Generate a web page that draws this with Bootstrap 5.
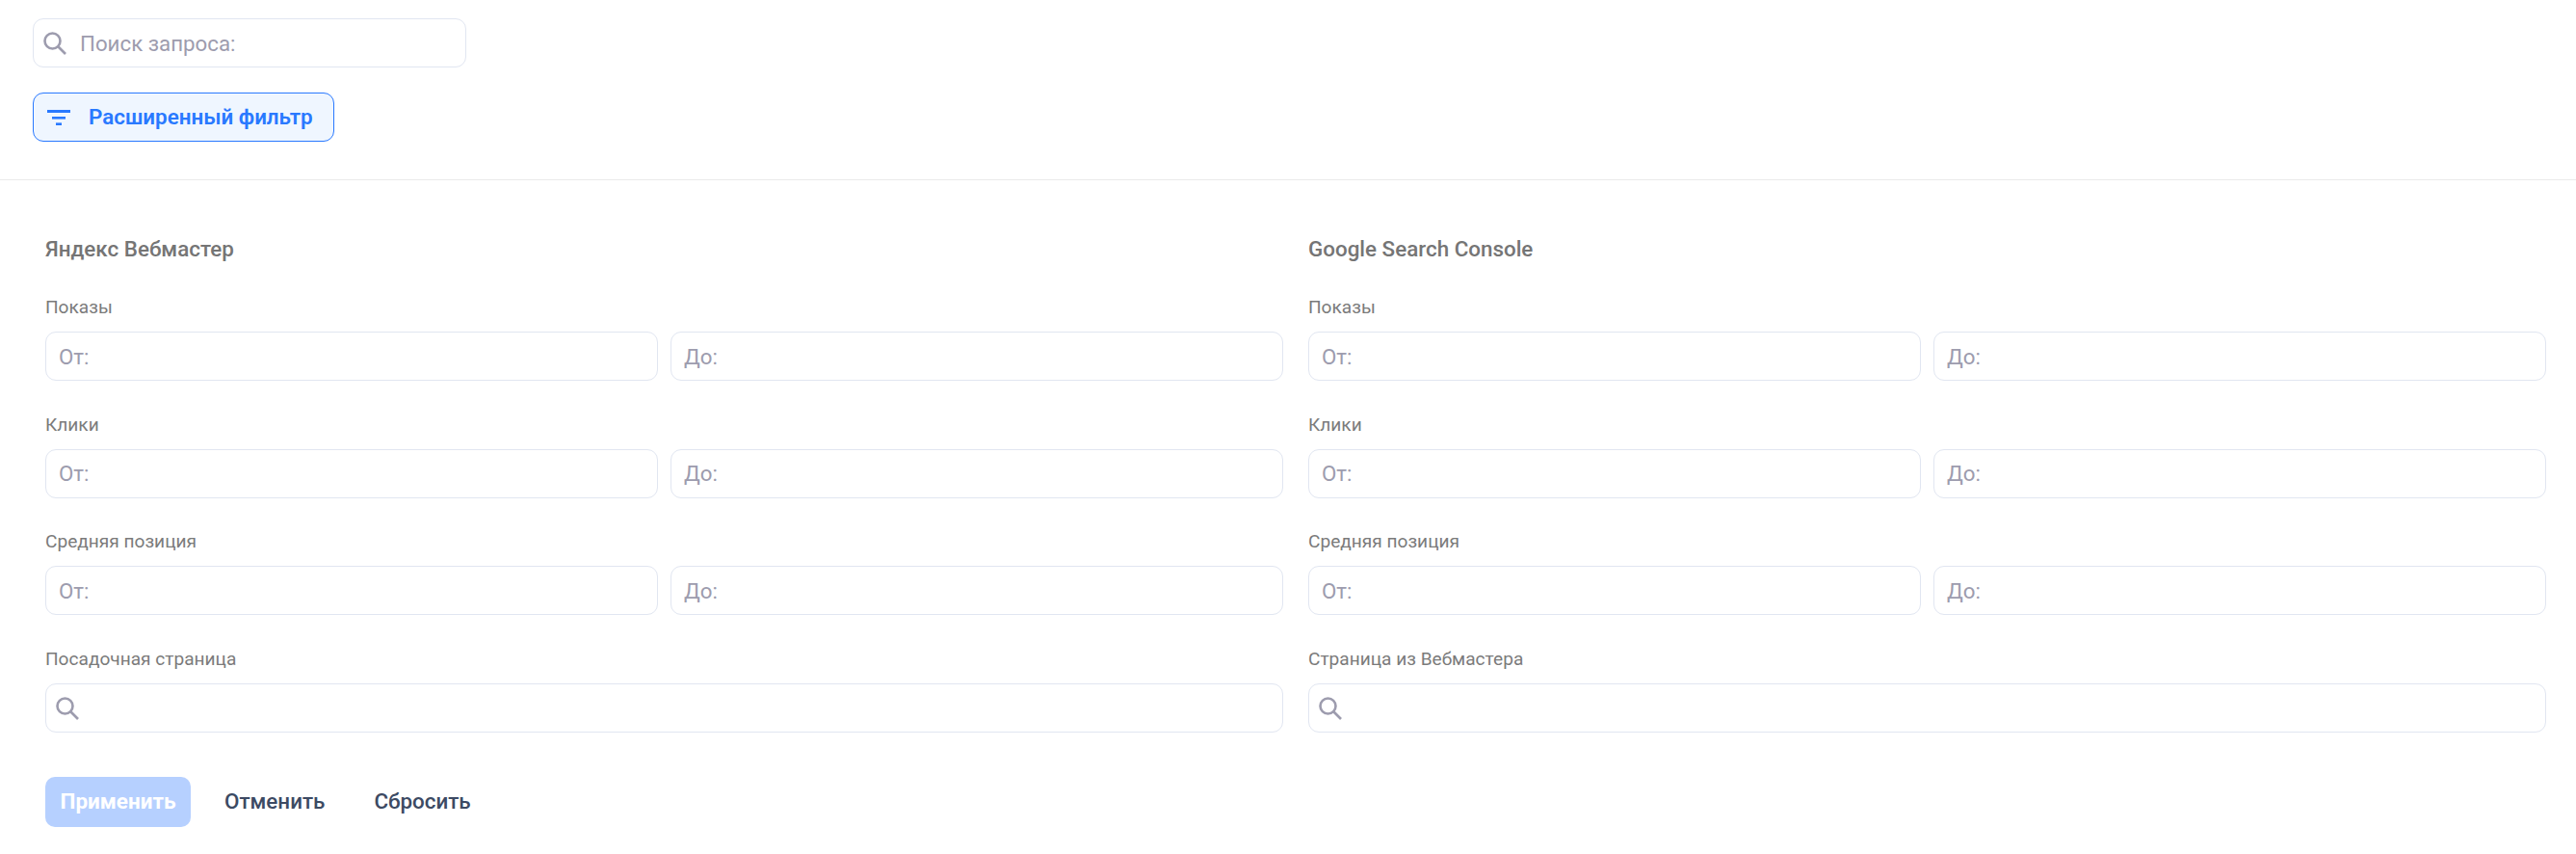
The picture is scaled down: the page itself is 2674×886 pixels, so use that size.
<!DOCTYPE html>
<html lang="ru">
<head>
    <meta charset="UTF-8">
    <meta name="viewport" content="width=device-width, initial-scale=1.0">
    <title>Фильтр запросов</title>
    <link rel="stylesheet" href="https://cdn.jsdelivr.net/npm/bootstrap@5.3.3/dist/css/bootstrap.min.css">
<style>
    body {
        font-family: Roboto, "Liberation Sans", sans-serif;
        background: #fff;
    }
    .top-bar {
        padding: 19px 34px 39px;
        border-bottom: 1px solid #eaeaea;
    }
    .search-wrap {
        position: relative;
    }
    .search-wrap svg {
        position: absolute;
        left: 10px;
        top: 13px;
    }
    .query-search {
        width: 450px;
    }
    .form-control.field {
        height: 51px;
        padding: 0 13px;
        font-size: 22.3px;
        color: #333;
        border: 1px solid #e1e6f1;
        border-radius: 11px;
        box-shadow: none;
    }
    .form-control.field::placeholder {
        color: #9d9cae;
        opacity: 1;
    }
    .query-search .form-control.field {
        padding-left: 48px;
    }
    .btn.filter-btn {
        width: 313px;
        height: 51px;
        margin-top: 26px;
        padding: 0 0 0 14px;
        gap: 19px;
        font-size: 22.4px;
        font-weight: 600;
        color: #2979ff;
        background: #eff6ff;
        border: 1px solid #2979ff;
        border-radius: 11px;
    }
    .filter-form {
        padding: 56px 31px 30px 47px;
    }
    .source-cols {
        display: grid;
        grid-template-columns: 1fr 1fr;
        column-gap: 26px;
    }
    .source-title {
        margin: 0 0 33px;
        font-size: 22.4px;
        line-height: 30px;
        font-weight: 500;
        color: #757575;
    }
    .field-label {
        margin-bottom: 12px;
        font-size: 19.1px;
        line-height: 26px;
        color: #7b7b7b;
    }
    .field-group {
        margin-bottom: 32.5px;
    }
    .range-pair {
        display: grid;
        grid-template-columns: 1fr 1fr;
        column-gap: 13px;
    }
    .page-search .form-control.field {
        padding-left: 48px;
    }
    .action-row {
        margin-top: 14px;
    }
    .btn.apply-btn {
        width: 151px;
        height: 52px;
        padding: 0;
        font-size: 22.5px;
        font-weight: 700;
        color: #fff;
        background: #b6d0ff;
        border: 0;
        border-radius: 10px;
        opacity: 1;
    }
    .btn.plain-btn {
        padding: 0;
        font-size: 22.4px;
        font-weight: 500;
        color: #3c4a63;
        border: 0;
    }
    .cancel-btn {
        margin: 0 51px 0 35px;
    }
</style>
</head>
<body>
    <div class="top-bar">
        <div class="search-wrap query-search">
            <svg width="26" height="26" viewBox="0 0 26 26" fill="none" stroke="#9d9cae" stroke-width="2.6"><circle cx="10.5" cy="10.5" r="8"/><path d="M16.5 16.5l7.5 7.5"/></svg>
            <input type="text" class="form-control field" placeholder="Поиск запроса:">
        </div>
        <button type="button" class="btn filter-btn d-flex align-items-center">
            <svg width="24" height="16" viewBox="0 0 24 16" fill="#2979ff"><rect x="0" y="0" width="24" height="3"/><rect x="5" y="7" width="14" height="2.6"/><rect x="9" y="13.4" width="6" height="2.6"/></svg>
            <span>Расширенный фильтр</span>
        </button>
    </div>

    <form class="filter-form">
        <div class="source-cols">
            <div>
                <h2 class="source-title">Яндекс Вебмастер</h2>
                <div class="field-group">
                    <div class="field-label">Показы</div>
                    <div class="range-pair">
                        <input type="text" class="form-control field" placeholder="От:">
                        <input type="text" class="form-control field" placeholder="До:">
                    </div>
                </div>
                <div class="field-group">
                    <div class="field-label">Клики</div>
                    <div class="range-pair">
                        <input type="text" class="form-control field" placeholder="От:">
                        <input type="text" class="form-control field" placeholder="До:">
                    </div>
                </div>
                <div class="field-group">
                    <div class="field-label">Средняя позиция</div>
                    <div class="range-pair">
                        <input type="text" class="form-control field" placeholder="От:">
                        <input type="text" class="form-control field" placeholder="До:">
                    </div>
                </div>
                <div class="field-group">
                    <div class="field-label">Посадочная страница</div>
                    <div class="search-wrap page-search">
                        <svg width="26" height="26" viewBox="0 0 26 26" fill="none" stroke="#9d9cae" stroke-width="2.6"><circle cx="10.5" cy="10.5" r="8"/><path d="M16.5 16.5l7.5 7.5"/></svg>
                        <input type="text" class="form-control field">
                    </div>
                </div>
            </div>
            <div>
                <h2 class="source-title">Google Search Console</h2>
                <div class="field-group">
                    <div class="field-label">Показы</div>
                    <div class="range-pair">
                        <input type="text" class="form-control field" placeholder="От:">
                        <input type="text" class="form-control field" placeholder="До:">
                    </div>
                </div>
                <div class="field-group">
                    <div class="field-label">Клики</div>
                    <div class="range-pair">
                        <input type="text" class="form-control field" placeholder="От:">
                        <input type="text" class="form-control field" placeholder="До:">
                    </div>
                </div>
                <div class="field-group">
                    <div class="field-label">Средняя позиция</div>
                    <div class="range-pair">
                        <input type="text" class="form-control field" placeholder="От:">
                        <input type="text" class="form-control field" placeholder="До:">
                    </div>
                </div>
                <div class="field-group">
                    <div class="field-label">Страница из Вебмастера</div>
                    <div class="search-wrap page-search">
                        <svg width="26" height="26" viewBox="0 0 26 26" fill="none" stroke="#9d9cae" stroke-width="2.6"><circle cx="10.5" cy="10.5" r="8"/><path d="M16.5 16.5l7.5 7.5"/></svg>
                        <input type="text" class="form-control field">
                    </div>
                </div>
            </div>
        </div>
        <div class="d-flex align-items-center action-row">
            <button type="button" class="btn apply-btn" disabled>Применить</button>
            <button type="button" class="btn plain-btn cancel-btn">Отменить</button>
            <button type="button" class="btn plain-btn">Сбросить</button>
        </div>
    </form>

    <script src="https://cdn.jsdelivr.net/npm/bootstrap@5.3.3/dist/js/bootstrap.bundle.min.js"></script>
</body>
</html>
